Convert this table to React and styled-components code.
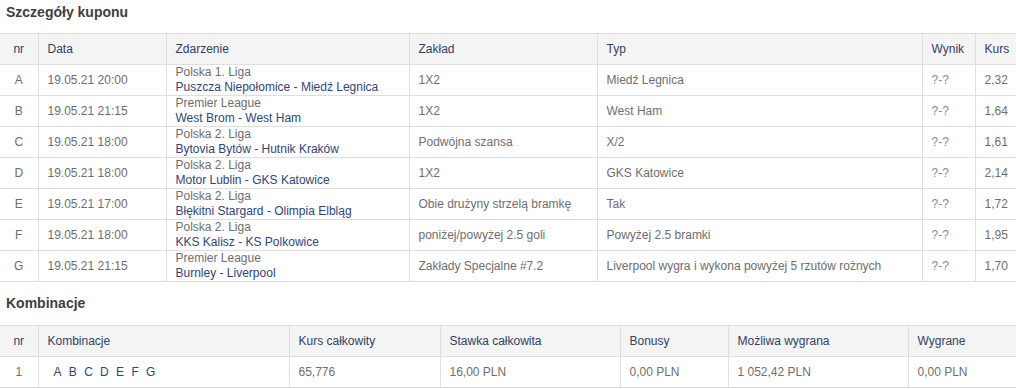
import React from "react";
import styled, { createGlobalStyle } from "styled-components";

const Global = createGlobalStyle`
  html, body { margin: 0; padding: 0; background: #fff; }
  body { font-family: "Liberation Sans", Arial, sans-serif; font-size: 12px; }
  *, *::before, *::after { box-sizing: border-box; }
`;

const Page = styled.div`
  width: 1016px;
  display: flex;
  flex-direction: column;
`;

const Title = styled.h3`
  margin: 0;
  padding: ${(p) => p.$pad};
  font-size: 14px;
  line-height: 16px;
  font-weight: bold;
  color: #404040;
  padding-left: 6px;
`;

const Table = styled.table`
  width: 1016px;
  border-collapse: collapse;
  table-layout: fixed;
`;

const Th = styled.th`
  width: ${(p) => p.$w}px;
  height: 31px;
  padding: 0 ${(p) => (p.$center ? 0 : 9)}px;
  background: #f4f4f4;
  border-top: 1px solid #dedede;
  border-bottom: 1px solid #dedede;
  border-left: ${(p) => (p.$first ? "none" : "1px solid #dedede")};
  text-align: ${(p) => (p.$center ? "center" : "left")};
  font-weight: normal;
  color: #2f4263;
  font-size: 12px;
  white-space: nowrap;
`;

const Td = styled.td`
  height: 31px;
  padding: 0 ${(p) => (p.$center ? 0 : 9)}px;
  border-bottom: 1px solid #dedede;
  border-left: ${(p) => (p.$first ? "none" : "1px solid #dedede")};
  text-align: ${(p) => (p.$center ? "center" : "left")};
  color: ${(p) => (p.$muted ? "#8a8a8a" : "#6e6e6e")};
  font-size: 12px;
  line-height: 15px;
  white-space: nowrap;
  overflow: hidden;
`;

const League = styled.div`
  color: #6e6e6e;
  line-height: 15px;
`;

const Match = styled.div`
  color: #2f4673;
  line-height: 15px;
`;

const Letters = styled.div`
  display: flex;
  gap: 7.3px;
  padding-left: 6px;
  color: #2f4673;
`;

const bets = [
  ["A", "19.05.21 20:00", "Polska 1. Liga", "Puszcza Niepołomice - Miedź Legnica", "1X2", "Miedź Legnica", "2,32"],
  ["B", "19.05.21 21:15", "Premier League", "West Brom - West Ham", "1X2", "West Ham", "1,64"],
  ["C", "19.05.21 18:00", "Polska 2. Liga", "Bytovia Bytów - Hutnik Kraków", "Podwójna szansa", "X/2", "1,61"],
  ["D", "19.05.21 18:00", "Polska 2. Liga", "Motor Lublin - GKS Katowice", "1X2", "GKS Katowice", "2,14"],
  ["E", "19.05.21 17:00", "Polska 2. Liga", "Błękitni Stargard - Olimpia Elbląg", "Obie drużyny strzelą bramkę", "Tak", "1,72"],
  ["F", "19.05.21 18:00", "Polska 2. Liga", "KKS Kalisz - KS Polkowice", "poniżej/powyżej 2.5 goli", "Powyżej 2.5 bramki", "1,95"],
  ["G", "19.05.21 21:15", "Premier League", "Burnley - Liverpool", "Zakłady Specjalne #7.2", "Liverpool wygra i wykona powyżej 5 rzutów rożnych", "1,70"],
];

const cols1 = [
  ["nr", 38, true],
  ["Data", 128],
  ["Zdarzenie", 243],
  ["Zakład", 188],
  ["Typ", 325],
  ["Wynik", 53],
  ["Kurs", 41],
];

const cols2 = [
  ["nr", 38, true],
  ["Kombinacje", 251],
  ["Kurs całkowity", 151],
  ["Stawka całkowita", 180],
  ["Bonusy", 108],
  ["Możliwa wygrana", 180],
  ["Wygrane", 108],
];

function Head({ cols }) {
  return (
    <thead>
      <tr>
        {cols.map(([label, w, center], i) => (
          <Th key={label} $w={w} $center={center} $first={i === 0}>
            {label}
          </Th>
        ))}
      </tr>
    </thead>
  );
}

export default function App() {
  return (
    <Page>
      <Global />
      <Title $pad="4px 0 13px">Szczegóły kuponu</Title>
      <Table>
        <Head cols={cols1} />
        <tbody>
          {bets.map(([nr, date, league, match, bet, type, odd]) => (
            <tr key={nr}>
              <Td $center $first>{nr}</Td>
              <Td>{date}</Td>
              <Td>
                <League>{league}</League>
                <Match>{match}</Match>
              </Td>
              <Td>{bet}</Td>
              <Td>{type}</Td>
              <Td $muted>?-?</Td>
              <Td>{odd}</Td>
            </tr>
          ))}
        </tbody>
      </Table>
      <Title $pad="13px 0 14px">Kombinacje</Title>
      <Table>
        <Head cols={cols2} />
        <tbody>
          <tr>
            <Td $center $first>1</Td>
            <Td>
              <Letters>
                {["A", "B", "C", "D", "E", "F", "G"].map((l) => (
                  <span key={l}>{l}</span>
                ))}
              </Letters>
            </Td>
            <Td>65,776</Td>
            <Td>16,00 PLN</Td>
            <Td>0,00 PLN</Td>
            <Td>1 052,42 PLN</Td>
            <Td>0,00 PLN</Td>
          </tr>
        </tbody>
      </Table>
    </Page>
  );
}
